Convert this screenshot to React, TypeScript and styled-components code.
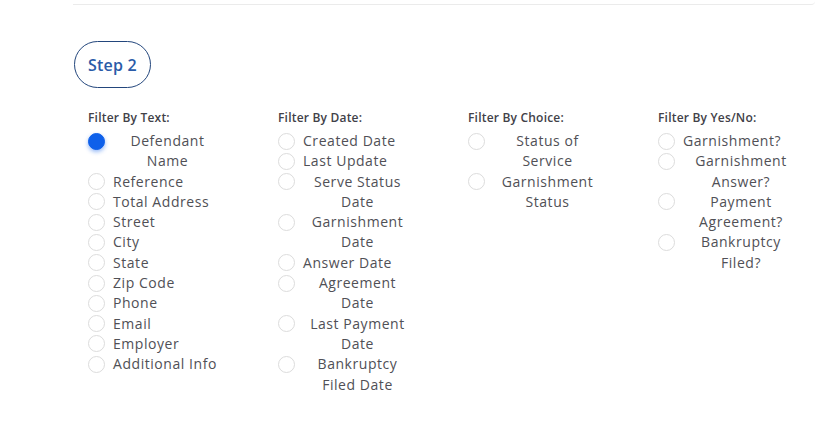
import React from 'react'
import styled, { createGlobalStyle } from 'styled-components'

const GlobalStyle = createGlobalStyle`
  body {
    margin: 0;
    background: #ffffff;
    font-family: "Open Sans", "Liberation Sans", sans-serif;
  }
`

const Page = styled.div`
  width: 742px;
  padding-left: 73px;
`

const TopRule = styled.div`
  height: 4px;
  border-bottom: 1px solid #ebebeb;
  border-bottom-right-radius: 4px;
`

const StepPill = styled.div`
  margin: 36px 0 0 1px;
  width: 77px;
  height: 47px;
  box-sizing: border-box;
  border: 1px solid #23467c;
  border-radius: 24px;
  display: flex;
  align-items: center;
  justify-content: center;
  color: #2a5ba8;
  font-size: 16px;
  font-weight: 600;
  letter-spacing: 0.2px;
`

const Filters = styled.div`
  display: grid;
  grid-template-columns: repeat(4, 190px);
  padding: 22px 0 0 15px;
`

const Column = styled.div<{ width: number }>`
  width: ${({ width }) => width}px;
  display: flex;
  flex-direction: column;
`

const Heading = styled.div`
  font-size: 12px;
  font-weight: 600;
  line-height: 16px;
  color: #414148;
  margin-bottom: 5px;
  letter-spacing: 0.2px;
`

const Option = styled.label`
  display: flex;
  align-items: flex-start;
  cursor: pointer;
`

const Radio = styled.span<{ checked: boolean }>`
  flex: none;
  width: 17px;
  height: 17px;
  margin-top: 1.5px;
  box-sizing: border-box;
  border-radius: 50%;
  border: 1px solid ${({ checked }) => (checked ? '#0e60ea' : '#dcdcdc')};
  background: ${({ checked }) => (checked ? '#0e60ea' : '#ffffff')};
  box-shadow: ${({ checked }) => (checked ? '0 2px 4px rgba(14, 96, 234, 0.45)' : 'none')};
`

const Label = styled.span`
  margin-left: 8px;
  font-size: 14px;
  line-height: 20.3px;
  color: #505056;
  text-align: center;
  letter-spacing: 0.55px;
`

type Group = { title: string; width: number; options: string[] }

const groups: Group[] = [
  {
    title: 'Filter By Text:',
    width: 134,
    options: [
      'Defendant Name',
      'Reference',
      'Total Address',
      'Street',
      'City',
      'State',
      'Zip Code',
      'Phone',
      'Email',
      'Employer',
      'Additional Info',
    ],
  },
  {
    title: 'Filter By Date:',
    width: 134,
    options: [
      'Created Date',
      'Last Update',
      'Serve Status Date',
      'Garnishment Date',
      'Answer Date',
      'Agreement Date',
      'Last Payment Date',
      'Bankruptcy Filed Date',
    ],
  },
  {
    title: 'Filter By Choice:',
    width: 134,
    options: ['Status of Service', 'Garnishment Status'],
  },
  {
    title: 'Filter By Yes/No:',
    width: 141,
    options: ['Garnishment?', 'Garnishment Answer?', 'Payment Agreement?', 'Bankruptcy Filed?'],
  },
]

export default function App() {
  const [selected, setSelected] = React.useState('Defendant Name')
  return (
    <>
      <GlobalStyle />
      <Page>
        <TopRule />
        <StepPill>Step 2</StepPill>
        <Filters>
          {groups.map((group) => (
            <Column key={group.title} width={group.width}>
              <Heading>{group.title}</Heading>
              {group.options.map((opt) => (
                <Option key={opt} onClick={() => setSelected(opt)}>
                  <Radio checked={selected === opt} />
                  <Label>{opt}</Label>
                </Option>
              ))}
            </Column>
          ))}
        </Filters>
      </Page>
    </>
  )
}
